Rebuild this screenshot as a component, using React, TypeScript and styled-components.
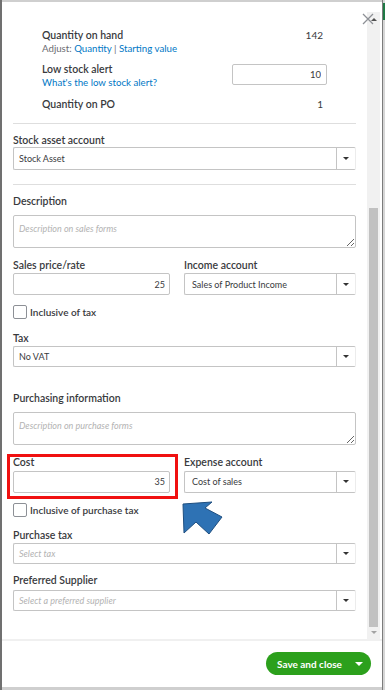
import React from "react";
import styled, { createGlobalStyle } from "styled-components";

const GlobalStyle = createGlobalStyle`
  html, body { margin: 0; padding: 0; }
  body { font-family: Lato, "Open Sans", sans-serif; background: #c9c9c9; }
  * { box-sizing: border-box; }
`;

const Screen = styled.div`
  width: 385px;
  height: 690px;
  display: flex;
  background: #cfcfcf;
  border-left: 2px solid #707070;
  overflow: hidden;
`;

const Panel = styled.div`
  position: relative;
  width: 380px;
  height: 685px;
  margin-top: 2px;
  background: #fff;
  display: flex;
  flex-direction: column;
`;

const Backdrop = styled.div`
  flex: 1;
  display: flex;
  flex-direction: column;
  border-left: 1px solid #7c7c7c;
  background: #d6d6d6;
`;

const BackdropBar = styled.div`
  height: 17px;
  margin-top: 3px;
  background: #1f7a45;
`;

const Body = styled.div`
  height: 637px;
  display: flex;
`;

const Content = styled.div`
  width: 365px;
  padding: 26.5px 11px 0 11px;
  overflow: hidden;
  color: #393a3d;
`;

const Scrollbar = styled.div`
  width: 13px;
  margin-top: 10px;
  background: #f1f1f1;
  display: flex;
  flex-direction: column;
  align-items: center;
`;

const ScrollArrow = styled.div<{ $down?: boolean }>`
  width: 0;
  height: 0;
  border-left: 3px solid transparent;
  border-right: 3px solid transparent;
  ${(p) =>
    p.$down
      ? "border-top: 3px solid #a3a3a3; margin: 0 0 5px;"
      : "border-bottom: 3px solid #505050; margin: 6px 0 0;"}
`;

const ScrollTrack = styled.div`
  flex: 1;
  width: 100%;
  display: flex;
  flex-direction: column;
  align-items: center;
`;

const Thumb = styled.div`
  width: 9px;
  margin-top: 187px;
  height: 419px;
  background: #c1c1c1;
`;

const CloseButton = styled.button`
  position: absolute;
  top: 11px;
  left: 360px;
  width: 12px;
  height: 12px;
  padding: 0;
  border: none;
  background: transparent;
  cursor: pointer;
`;

const StockInfo = styled.div`
  padding: 0 29px;
  display: flex;
  flex-direction: column;
`;

const InfoRow = styled.div<{ $mt?: number }>`
  display: flex;
  justify-content: space-between;
  align-items: flex-start;
  margin-top: ${(p) => p.$mt ?? 0}px;
`;

const InfoLeft = styled.div`
  display: flex;
  flex-direction: column;
`;

const Label = styled.div<{ $gap?: number }>`
  font-size: 10.5px;
  font-weight: 600;
  line-height: 13px;
  color: #393a3d;
  margin-bottom: ${(p) => p.$gap ?? 1.5}px;
  white-space: nowrap;
`;

const SubText = styled.div`
  font-size: 9.7px;
  line-height: 13px;
  color: #6b6c72;
  white-space: nowrap;
`;

const Link = styled.a`
  color: #0077c5;
  text-decoration: none;
  font-size: 9.7px;
  line-height: 13px;
`;

const Value = styled.div`
  font-size: 10px;
  line-height: 13px;
  color: #393a3d;
  padding-right: 4px;
`;

const SmallInput = styled.input`
  width: 95px;
  height: 21px;
  margin-top: 0.5px;
  border: 1px solid #c4c4c4;
  border-radius: 2px;
  padding: 0 5px;
  text-align: right;
  font-family: Lato, sans-serif;
  font-size: 9.5px;
  color: #393a3d;
  outline: none;
`;

const Rule = styled.hr<{ $mt: number }>`
  margin: ${(p) => p.$mt}px 0 0;
  border: none;
  height: 1px;
  background: #dedede;
`;

const Section = styled.div<{ $mt: number }>`
  margin-top: ${(p) => p.$mt}px;
`;

const TwoCol = styled.div<{ $mt: number }>`
  margin-top: ${(p) => p.$mt}px;
  display: grid;
  grid-template-columns: 157px 1fr;
  column-gap: 14px;
`;

const Cell = styled.div`
  position: relative;
`;

const TextInput = styled.input<{ $h?: number }>`
  display: block;
  width: 100%;
  height: ${(p) => p.$h ?? 22}px;
  border: 1px solid #c4c4c4;
  border-radius: 2px;
  padding: 0 4px;
  text-align: right;
  font-family: Lato, sans-serif;
  font-size: 9px;
  color: #393a3d;
  outline: none;
`;

const SelectBox = styled.div<{ $h?: number }>`
  display: flex;
  height: ${(p) => p.$h ?? 22}px;
  border: 1px solid #c4c4c4;
  border-right-color: #ececec;
  border-radius: 2px;
  background: #fff;
`;

const SelectText = styled.div<{ $pad?: number; $placeholder?: boolean }>`
  flex: 1;
  display: flex;
  align-items: center;
  padding-left: ${(p) => p.$pad ?? 5}px;
  font-size: 9px;
  color: ${(p) => (p.$placeholder ? "#b3b3b3" : "#393a3d")};
  font-style: ${(p) => (p.$placeholder ? "italic" : "normal")};
  white-space: nowrap;
`;

const SelectToggle = styled.div`
  width: 19px;
  border-left: 1px solid #c4c4c4;
  display: flex;
  align-items: center;
  justify-content: center;
`;

const Caret = styled.div<{ $color?: string; $size?: number }>`
  width: 0;
  height: 0;
  border-left: ${(p) => p.$size ?? 3}px solid transparent;
  border-right: ${(p) => p.$size ?? 3}px solid transparent;
  border-top: ${(p) => p.$size ?? 3}px solid ${(p) => p.$color ?? "#333"};
`;

const TextArea = styled.textarea`
  display: block;
  width: 100%;
  height: 33px;
  border: 1px solid #c4c4c4;
  border-radius: 2px;
  padding: 7px 5px;
  font-family: Lato, sans-serif;
  font-size: 9px;
  color: #393a3d;
  outline: none;
  resize: vertical;
  &::placeholder {
    color: #b3b3b3;
    font-style: italic;
  }
`;

const CheckRow = styled.label<{ $mt: number }>`
  margin-top: ${(p) => p.$mt}px;
  display: flex;
  align-items: center;
  gap: 3px;
  font-size: 10px;
  font-weight: 600;
  color: #393a3d;
  line-height: 14px;
`;

const CheckBox = styled.span`
  width: 14px;
  height: 14px;
  border: 1px solid #8d9096;
  border-radius: 2px;
  background: #fff;
`;

const Highlight = styled.div`
  position: absolute;
  top: -1.5px;
  left: -6px;
  right: -8px;
  bottom: -6.5px;
  border: 3px solid #f01010;
  pointer-events: none;
`;

const Pointer = styled.svg`
  position: absolute;
  left: 167px;
  top: 44.5px;
  overflow: visible;
  pointer-events: none;
`;

const Footer = styled.div`
  flex: 1;
  border-top: 2px solid #f0f0f0;
  display: flex;
  justify-content: flex-end;
  align-items: flex-start;
  padding: 11px 11px 0 0;
`;

const SaveButton = styled.div`
  display: flex;
  align-items: center;
  width: 105px;
  height: 23px;
  border-radius: 12px;
  background: #2ca01c;
  color: #fff;
  font-size: 10px;
  font-weight: 700;
`;

const SaveLabel = styled.span`
  flex: 1;
  padding-left: 11px;
  white-space: nowrap;
`;

const SaveCaret = styled.span`
  width: 22px;
  display: flex;
  justify-content: center;
  padding-right: 2px;
`;

function Select({
  text,
  placeholder,
  pad,
  h,
}: {
  text?: string;
  placeholder?: string;
  pad?: number;
  h?: number;
}) {
  return (
    <SelectBox $h={h}>
      <SelectText $pad={pad} $placeholder={!text}>
        {text ?? placeholder}
      </SelectText>
      <SelectToggle>
        <Caret />
      </SelectToggle>
    </SelectBox>
  );
}

export default function App() {
  return (
    <>
      <GlobalStyle />
      <Screen>
        <Panel>
          <Body>
            <Content>
              <StockInfo>
                <InfoRow>
                  <InfoLeft>
                    <Label $gap={0}>Quantity on hand</Label>
                    <SubText>
                      Adjust: <Link>Quantity</Link> | <Link>Starting value</Link>
                    </SubText>
                  </InfoLeft>
                  <Value>142</Value>
                </InfoRow>
                <InfoRow $mt={8.5}>
                  <InfoLeft>
                    <Label $gap={0}>Low stock alert</Label>
                    <Link>What's the low stock alert?</Link>
                  </InfoLeft>
                  <SmallInput defaultValue="10" />
                </InfoRow>
                <InfoRow $mt={9}>
                  <Label $gap={0}>Quantity on PO</Label>
                  <Value>1</Value>
                </InfoRow>
              </StockInfo>

              <Rule $mt={12} />

              <Section $mt={9.5}>
                <Label $gap={0.5}>Stock asset account</Label>
                <Select text="Stock Asset" h={23} />
              </Section>

              <Rule $mt={14} />

              <Section $mt={9.5}>
                <Label $gap={7.5}>Description</Label>
                <TextArea placeholder="Description on sales forms" />
              </Section>

              <TwoCol $mt={10.5}>
                <Cell>
                  <Label>Sales price/rate</Label>
                  <TextInput defaultValue="25" />
                </Cell>
                <Cell>
                  <Label>Income account</Label>
                  <Select text="Sales of Product Income" pad={7} />
                </Cell>
              </TwoCol>

              <CheckRow $mt={10}>
                <CheckBox />
                Inclusive of tax
              </CheckRow>

              <Section $mt={12.5}>
                <Label>Tax</Label>
                <Select text="No VAT" h={21} />
              </Section>

              <Section $mt={24.5}>
                <Label $gap={7.5}>Purchasing information</Label>
                <TextArea placeholder="Description on purchase forms" />
              </Section>

              <TwoCol $mt={10.5}>
                <Cell>
                  <Label $gap={2}>Cost</Label>
                  <TextInput defaultValue="35" />
                  <Highlight />
                  <Pointer width="45" height="38" viewBox="0 0 45 38">
                    <polygon
                      points="3,4 32,2 25,8 42,17 29,34 16,22 4,33"
                      fill="#2e72b4"
                      stroke="#1f4f80"
                      strokeWidth="1"
                      strokeLinejoin="round"
                    />
                  </Pointer>
                </Cell>
                <Cell>
                  <Label $gap={2}>Expense account</Label>
                  <Select text="Cost of sales" pad={7} />
                </Cell>
              </TwoCol>

              <CheckRow $mt={10.5}>
                <CheckBox />
                Inclusive of purchase tax
              </CheckRow>

              <Section $mt={11.5}>
                <Label>Purchase tax</Label>
                <Select placeholder="Select tax" h={21} />
              </Section>

              <Section $mt={9.5}>
                <Label $gap={3}>Preferred Supplier</Label>
                <Select placeholder="Select a preferred supplier" h={21} />
              </Section>
            </Content>
            <Scrollbar>
              <ScrollArrow />
              <ScrollTrack>
                <Thumb />
              </ScrollTrack>
              <ScrollArrow $down />
            </Scrollbar>
          </Body>
          <Footer>
            <SaveButton>
              <SaveLabel>Save and close</SaveLabel>
              <SaveCaret>
                <Caret $color="#fff" $size={4} />
              </SaveCaret>
            </SaveButton>
          </Footer>
          <CloseButton aria-label="Close">
            <svg width="12" height="12" viewBox="0 0 12 12">
              <path d="M1 1 L11 11 M11 1 L1 11" stroke="#8d9096" strokeWidth="1.3" />
            </svg>
          </CloseButton>
        </Panel>
        <Backdrop>
          <BackdropBar />
        </Backdrop>
      </Screen>
    </>
  );
}
